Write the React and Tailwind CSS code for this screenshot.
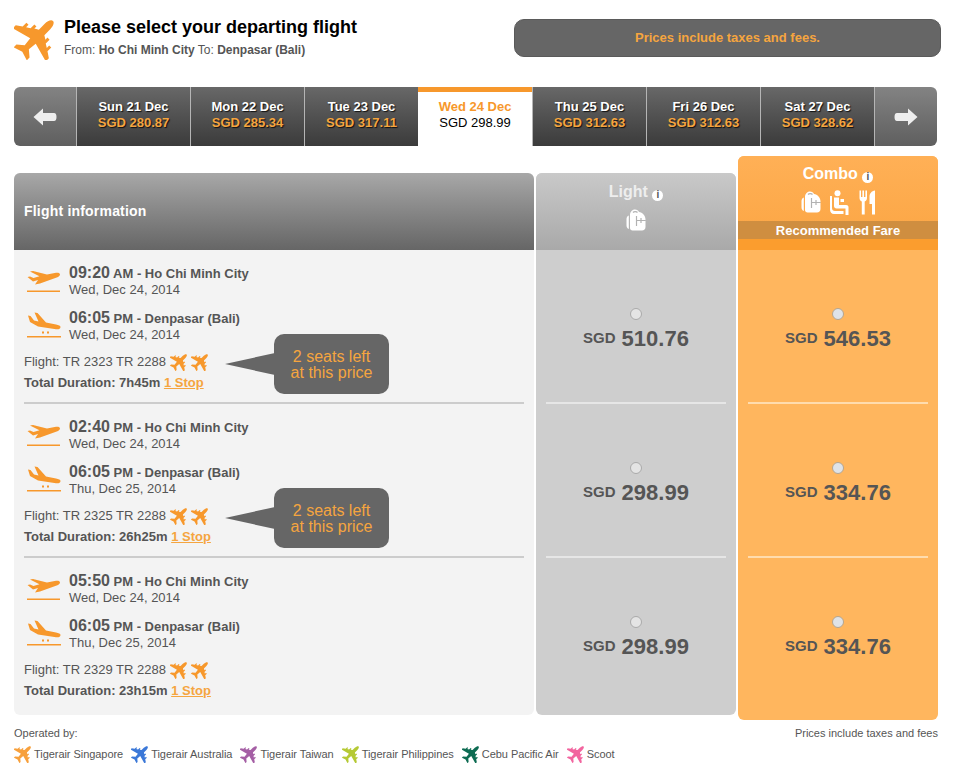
import React from "react";

const PLANE =
  "M50 2C45 2 42 10 42 18L42 35L34 40L34 34L28 34L28 45L20 50L20 43L14 43L14 54L2 62L2 71L42 60L44 78L31 89L31 97L50 91L69 97L69 89L56 78L58 60L98 71L98 62L86 54L86 43L80 43L80 50L72 45L72 34L66 34L66 40L58 35L58 18C58 10 55 2 50 2Z";

function Plane({ color = "#f7982c", className }) {
  return (
    <svg viewBox="4 14 82 82" className={className}>
      <path d={PLANE} fill={color} transform="rotate(45 50 50)" />
    </svg>
  );
}

function Takeoff() {
  return (
    <svg viewBox="0 0 34 24" className="w-[34px] h-[24px] shrink-0">
      <path
        d="M33 4.5C33 6 31 7 29 7.8L13 13.5L8 14.5L11 10L6 11.5L0.5 7L3 6.5L6.5 8L12.5 6.3L3 1.5L6 1L20 4.5L29 2.8C31 2.4 33 3 33 4.5Z"
        fill="#f7982c"
      />
      <rect x="0" y="20.5" width="33" height="1.5" fill="#f7982c" />
    </svg>
  );
}

function Landing() {
  return (
    <svg viewBox="0 0 34 26" className="w-[34px] h-[26px] shrink-0">
      <path
        d="M33.5 15C33.5 17 31.5 17.5 29 17.2L11 14.5L3 10L1 3.5L3.5 4L7 8.5L11.5 9.5L7.5 0.5L10.5 1L19 10.5L29 12.5C31.5 13 33.5 13.5 33.5 15Z"
        fill="#f7982c"
      />
      <rect x="15" y="19.5" width="2" height="2" fill="#f7982c" />
      <rect x="20" y="19.5" width="2" height="2" fill="#f7982c" />
      <rect x="0" y="24" width="34" height="1.5" fill="#f7982c" />
    </svg>
  );
}

function Backpack({ className }) {
  return (
    <svg viewBox="0 0 20 22" className={className}>
      <path
        d="M9 0.5C11 0.5 12.5 1.5 13 3C16.5 3.5 19.5 6.5 19.5 10.5L19.5 18C19.5 20 18 21.5 16 21.5L6.5 21.5C5 21.5 4 20.5 4 19L4 6C4 3 6 0.5 9 0.5Z"
        fill="#fff"
      />
      <path
        d="M2.8 6.5L2.8 20C1.2 19.5 0.5 18 0.5 16L0.5 10C0.5 8.5 1.2 7 2.8 6.5Z"
        fill="#fff"
      />
      <path
        d="M7 3.5C8 2.3 10.5 2.3 11.5 3.5M10.5 7L10.5 17M10.5 11.5L19.5 11.5M15 9L15 14"
        stroke="#000"
        strokeOpacity="0.3"
        strokeWidth="1.2"
        fill="none"
      />
    </svg>
  );
}

function Seat() {
  return (
    <svg viewBox="0 0 22 25" className="w-[22px] h-[25px]">
      <circle cx="8.5" cy="3.2" r="3" fill="#fff" />
      <path
        d="M5 7.5L10 7.5L10 15L17 15C19 15 19.5 16 19.5 17.5L19.5 25L16.5 25L16.5 18.5L7.5 18.5C6 18.5 5 17.5 5 16Z"
        fill="#fff"
      />
      <path d="M1 6L3 6L3 18C3 20 4 21 6 21L14.5 21L14.5 24L5 24C2.5 24 1 22 1 19.5Z" fill="#fff" />
      <path d="M11.5 9L15 9L15 12L11.5 12Z" fill="#fff" />
    </svg>
  );
}

function Cutlery() {
  return (
    <svg viewBox="0 0 17 25" className="w-[17px] h-[25px]">
      <path
        d="M0.5 0.5L2 0.5L2 7L3.4 7L3.4 0.5L5 0.5L5 7L6.4 7L6.4 0.5L8 0.5L8 8C8 10 7 11 5.7 11.5L5.7 24.5L2.8 24.5L2.8 11.5C1.5 11 0.5 10 0.5 8Z"
        fill="#fff"
      />
      <path d="M16 0.5L16 24.5L13 24.5L13 14L10.5 14L10.5 7C10.5 3.5 12.5 1 16 0.5Z" fill="#fff" />
    </svg>
  );
}

function Info() {
  return (
    <span className="inline-flex items-center justify-center w-[11px] h-[11px] rounded-full bg-white text-[#555] text-[10px] font-bold leading-none align-[-1px]">
      i
    </span>
  );
}

function Arrow({ flip }) {
  return (
    <svg viewBox="0 0 24 18" className={flip ? "w-6 h-[18px] -scale-x-100" : "w-6 h-[18px]"}>
      <path d="M0.5 9L10 0.5L10 5L21 5Q23.5 5 23.5 9Q23.5 13 21 13L10 13L10 17.5Z" fill="#eeeeee" />
    </svg>
  );
}

const days = [
  ["Sun 21 Dec", "SGD 280.87"],
  ["Mon 22 Dec", "SGD 285.34"],
  ["Tue 23 Dec", "SGD 317.11"],
  ["Wed 24 Dec", "SGD 298.99", true],
  ["Thu 25 Dec", "SGD 312.63"],
  ["Fri 26 Dec", "SGD 312.63"],
  ["Sat 27 Dec", "SGD 328.62"],
];

const flights = [
  {
    dep: "09:20",
    depPeriod: "AM",
    arr: "06:05",
    arrDate: "Wed, Dec 24, 2014",
    num: "TR 2323 TR 2288",
    dur: "7h45m",
    light: "510.76",
    combo: "546.53",
    seats: true,
  },
  {
    dep: "02:40",
    depPeriod: "PM",
    arr: "06:05",
    arrDate: "Thu, Dec 25, 2014",
    num: "TR 2325 TR 2288",
    dur: "26h25m",
    light: "298.99",
    combo: "334.76",
    seats: true,
  },
  {
    dep: "05:50",
    depPeriod: "PM",
    arr: "06:05",
    arrDate: "Thu, Dec 25, 2014",
    num: "TR 2329 TR 2288",
    dur: "23h15m",
    light: "298.99",
    combo: "334.76",
    seats: false,
  },
];

const operators = [
  ["Tigerair Singapore", "#f7a03c"],
  ["Tigerair Australia", "#3b78d8"],
  ["Tigerair Taiwan", "#a55fa5"],
  ["Tigerair Philippines", "#b5c934"],
  ["Cebu Pacific Air", "#0d6b52"],
  ["Scoot", "#f2659f"],
];

function FlightRow({ f, last }) {
  return (
    <div className={last ? "relative h-[154px] mx-[10px] pt-[14px]" : "relative h-[154px] mx-[10px] pt-[14px] border-b-2 border-[#cccccc]"}>
      <div className="flex ml-[3px] gap-[8px] h-[32px]">
        <div className="mt-[6px]">
          <Takeoff />
        </div>
        <div>
          <div className="text-[13px] leading-[18px] font-bold text-[#555]">
            <span className="text-[16px]">{f.dep}</span> {f.depPeriod} - Ho Chi Minh City
          </div>
          <div className="text-[13px] leading-[14px] text-[#555]">Wed, Dec 24, 2014</div>
        </div>
      </div>
      <div className="flex ml-[3px] gap-[8px] h-[32px] mt-[13px]">
        <div className="mt-[3px]">
          <Landing />
        </div>
        <div>
          <div className="text-[13px] leading-[18px] font-bold text-[#555]">
            <span className="text-[16px]">{f.arr}</span> PM - Denpasar (Bali)
          </div>
          <div className="text-[13px] leading-[14px] text-[#555]">{f.arrDate}</div>
        </div>
      </div>
      <div className="flex items-center gap-[4px] mt-[11px] h-[20px] text-[13px] text-[#555]">
        <span>Flight: {f.num}</span>
        <Plane className="w-[17px] h-[17px]" />
        <Plane className="w-[17px] h-[17px]" />
      </div>
      <div className="mt-[2px] text-[13px] leading-[18px] font-bold text-[#555]">
        Total Duration: {f.dur}{" "}
        <span className="text-[#f5a53f] underline">1 Stop</span>
      </div>
      {f.seats && (
        <div className="absolute left-[201px] top-[84px] flex items-center">
          <svg viewBox="0 0 50 22" className="w-[50px] h-[22px] -mr-px">
            <path d="M0 11L50 0L50 22Z" fill="#666666" />
          </svg>
          <div className="w-[115px] h-[60px] pt-[2px] rounded-[10px] bg-[#666] flex items-center justify-center text-center text-[16px] leading-[16px] text-[#f5a53f]">
            2 seats left
            <br />
            at this price
          </div>
        </div>
      )}
    </div>
  );
}

function PriceCell({ price, dividerClass, radioClass, last }) {
  return (
    <div className="relative h-[154px] flex flex-col items-center pt-[58px]">
      <span className={radioClass} />
      <div className="mt-[4px] flex items-center gap-[6px] font-bold text-[#555]">
        <span className="text-[15px] leading-[18px] -mt-[3px]">SGD</span>
        <span className="text-[22px] leading-[30px]">{price}</span>
      </div>
      {!last && <div className={dividerClass} />}
    </div>
  );
}

export default function App() {
  const radio =
    "w-[12px] h-[12px] rounded-full border border-[#aaa] bg-[#e4e4e4]";
  const radioCombo =
    "w-[12px] h-[12px] rounded-full border border-[#b5a58f] bg-[#dfe3e8]";
  return (
    <div className="w-[959px] h-[775px] bg-white overflow-hidden font-['Liberation_Sans',Arial,sans-serif]">
      <div className="flex h-[87px] pl-[14px] pt-[20px]">
        <Plane className="w-[40px] h-[40px]" />
        <div className="ml-[10px] -mt-[5px] w-[450px]">
          <div className="text-[18px] leading-[24px] font-bold text-black">Please select your departing flight</div>
          <div className="text-[12px] leading-[16px] mt-[3px] text-[#555]">
            From: <span className="font-bold">Ho Chi Minh City</span> To: <span className="font-bold">Denpasar (Bali)</span>
          </div>
        </div>
        <div className="w-[427px] h-[38px] -mt-px rounded-[10px] bg-[#666] border border-[#5a5a5a] flex items-center justify-center text-[13px] font-bold text-[#f5a53f]">
          Prices include taxes and fees.
        </div>
      </div>

      <div className="flex ml-[14px] w-[923px] h-[59px]">
        <div className="w-[62px] rounded-l-[6px] bg-gradient-to-b from-[#838383] to-[#5f5f5f] flex items-center justify-center">
          <Arrow />
        </div>
        {days.map(([day, price, active]) =>
          active ? (
            <div key={day} className="w-[114px] border-t-[5px] border-[#f7982c] bg-white pt-[7px] text-center text-[13px] leading-[16px]">
              <div className="font-bold text-[#f7982c]">{day}</div>
              <div className="text-black">{price}</div>
            </div>
          ) : (
            <div
              key={day}
              className="w-[114px] border-l border-[#b5b5b5] bg-gradient-to-b from-[#686868] to-[#3b3b3b] pt-[12px] text-center text-[13px] leading-[16px] font-bold [text-shadow:1px_1px_1px_#111]"
            >
              <div className="text-white">{day}</div>
              <div className="text-[#f5a53f]">{price}</div>
            </div>
          )
        )}
        <div className="w-[63px] rounded-r-[6px] border-l border-[#b5b5b5] bg-gradient-to-b from-[#838383] to-[#5f5f5f] flex items-center justify-center">
          <Arrow flip />
        </div>
      </div>

      <div className="flex items-start ml-[14px] mt-[10px] gap-[2px]">
        <div className="w-[520px] mt-[17px] rounded-[6px] overflow-hidden bg-[#f3f3f3] h-[542px]">
          <div className="h-[77px] bg-gradient-to-b from-[#a8a8a8] to-[#666] flex items-center pl-[10px] text-[14px] tracking-[0.2px] font-bold text-white">
            Flight information
          </div>
          {flights.map((f, i) => (
            <FlightRow key={f.num} f={f} last={i === 2} />
          ))}
        </div>

        <div className="w-[200px] mt-[17px] h-[542px] rounded-[6px] overflow-hidden bg-[#cecece]">
          <div className="h-[77px] bg-gradient-to-b from-[#c9c9c9] to-[#a9a9a9] flex flex-col items-center pt-[9px] text-white">
            <div className="text-[16px] leading-[20px] font-bold text-[#eee]">
              Light <Info />
            </div>
            <Backpack className="w-[20px] h-[22px] mt-[7px]" />
          </div>
          {flights.map((f, i) => (
            <PriceCell
              key={f.num}
              price={f.light}
              radioClass={radio}
              last={i === 2}
              dividerClass="absolute left-[10px] right-[10px] bottom-0 h-[2px] bg-[#e6e6e6]"
            />
          ))}
        </div>

        <div className="w-[200px] h-[564px] rounded-[6px] overflow-hidden bg-[#ffb65e]">
          <div className="h-[94px] bg-gradient-to-b from-[#ffb056] to-[#fba542] flex flex-col items-center pt-[8px] text-white">
            <div className="text-[16px] leading-[20px] font-bold">
              Combo <Info />
            </div>
            <div className="flex items-center gap-[8px] h-[26px] mt-[5px]">
              <Backpack className="w-[20px] h-[22px]" />
              <Seat />
              <Cutlery />
            </div>
            <div className="w-full h-[18px] mt-[6px] bg-[#cf8e40] text-center text-[13px] leading-[19px] font-bold">
              Recommended Fare
            </div>
            <div className="w-full flex-1 bg-[#fb9d2e]" />
          </div>
          {flights.map((f, i) => (
            <PriceCell
              key={f.num}
              price={f.combo}
              radioClass={radioCombo}
              last={i === 2}
              dividerClass="absolute left-[10px] right-[10px] bottom-0 h-[2px] bg-[#ffdcae]"
            />
          ))}
        </div>
      </div>

      <div className="flex justify-between ml-[14px] w-[924px] mt-[7px] text-[11px] leading-[13px] text-[#555]">
        <span>Operated by:</span>
        <span>Prices include taxes and fees</span>
      </div>
      <div className="flex items-center ml-[14px] mt-[6px] text-[11px] tracking-[-0.05px] text-[#555]">
        {operators.map(([name, color]) => (
          <div key={name} className="flex items-center mr-[8px]">
            <Plane color={color} className="w-[17px] h-[17px] mr-[3px]" />
            <span>{name}</span>
          </div>
        ))}
      </div>
    </div>
  );
}
